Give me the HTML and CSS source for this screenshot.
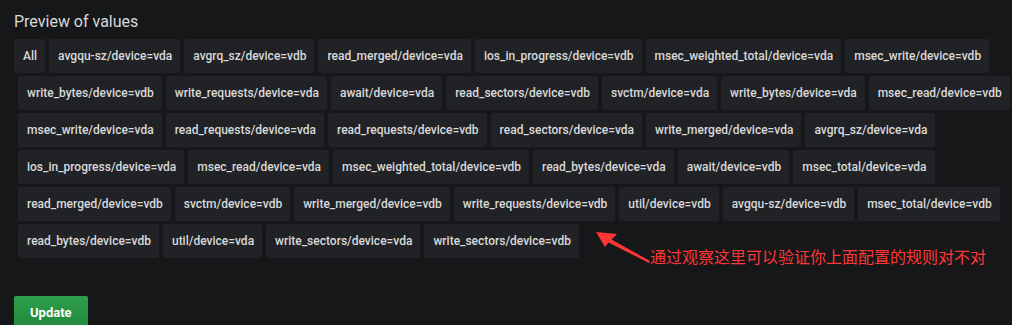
FILE: index.html
```html
<!DOCTYPE html>
<html lang="zh-CN">

<head>
    <meta charset="UTF-8">
    <title>Preview of values</title>
    <link rel="stylesheet" href="styles.css">
</head>

<body>
<div id="page">
    <div class="section-title">Preview of values</div>

    <div id="preview-values">
        <div class="value-row first-row">
            <span class="value-label">All</span>
            <span class="value-label">avgqu-sz/device=vda</span>
            <span class="value-label">avgrq_sz/device=vdb</span>
            <span class="value-label">read_merged/device=vda</span>
            <span class="value-label">ios_in_progress/device=vdb</span>
            <span class="value-label">msec_weighted_total/device=vda</span>
            <span class="value-label">msec_write/device=vdb</span>
        </div>
        <div class="value-row">
            <span class="value-label">write_bytes/device=vdb</span>
            <span class="value-label">write_requests/device=vda</span>
            <span class="value-label">await/device=vda</span>
            <span class="value-label">read_sectors/device=vdb</span>
            <span class="value-label">svctm/device=vda</span>
            <span class="value-label">write_bytes/device=vda</span>
            <span class="value-label">msec_read/device=vdb</span>
        </div>
        <div class="value-row">
            <span class="value-label">msec_write/device=vda</span>
            <span class="value-label">read_requests/device=vda</span>
            <span class="value-label">read_requests/device=vdb</span>
            <span class="value-label">read_sectors/device=vda</span>
            <span class="value-label">write_merged/device=vda</span>
            <span class="value-label">avgrq_sz/device=vda</span>
        </div>
        <div class="value-row">
            <span class="value-label">ios_in_progress/device=vda</span>
            <span class="value-label">msec_read/device=vda</span>
            <span class="value-label">msec_weighted_total/device=vdb</span>
            <span class="value-label">read_bytes/device=vda</span>
            <span class="value-label">await/device=vdb</span>
            <span class="value-label">msec_total/device=vda</span>
        </div>
        <div class="value-row">
            <span class="value-label">read_merged/device=vdb</span>
            <span class="value-label">svctm/device=vdb</span>
            <span class="value-label">write_merged/device=vdb</span>
            <span class="value-label">write_requests/device=vdb</span>
            <span class="value-label">util/device=vdb</span>
            <span class="value-label">avgqu-sz/device=vdb</span>
            <span class="value-label">msec_total/device=vdb</span>
        </div>
        <div class="value-row">
            <span class="value-label">read_bytes/device=vdb</span>
            <span class="value-label">util/device=vda</span>
            <span class="value-label">write_sectors/device=vda</span>
            <span class="value-label">write_sectors/device=vdb</span>
        </div>
    </div>

    <button id="update-button">Update</button>

    <!-- 标注 -->
    <svg class="note-arrow" width="70" height="40" viewBox="0 0 70 40">
        <polygon points="1,2 22,4 16.5,9.5 55,31 54,33 13.5,12.5 10,17" fill="#ff3636"/>
    </svg>
    <div class="note-text">通过观察这里可以验证你上面配置的规则对不对</div>
</div>
</body>

</html>
```

FILE: styles.css
```css
body {
    margin: 0;
    background-color: #161719;
    font-family: Roboto, "Helvetica Neue", Arial, sans-serif;
    color: #d8d9da;
    overflow: hidden;
}

#page {
    position: relative;
    padding: 12px 0 0 14px;
}

.section-title {
    font-size: 16px;
    line-height: 19px;
    margin-bottom: 8px;
}

#preview-values {
    display: flex;
    flex-direction: column;
    gap: 3px;
    padding-left: 4px;
}

.value-row {
    display: flex;
    gap: 4px;
}

.first-row {
    margin-left: -4px;
}

.value-label {
    height: 34px;
    line-height: 34px;
    padding: 0 8px 0 9px;
    background-color: #212225;
    border-radius: 2px;
    font-size: 12px;
    font-weight: 500;
    white-space: nowrap;
}

#update-button {
    margin-top: 38px;
    height: 32px;
    padding: 0 16px;
    border: none;
    border-radius: 2px;
    background: linear-gradient(to bottom, #2c9f4a, #23883d);
    color: #fff;
    font-family: Roboto, "Helvetica Neue", Arial, sans-serif;
    font-size: 13px;
    font-weight: 700;
}

.note-arrow {
    position: absolute;
    left: 595px;
    top: 230px;
}

.note-text {
    position: absolute;
    left: 650px;
    top: 246px;
    font-family: "Noto Sans CJK SC", sans-serif;
    font-size: 16px;
    line-height: 20px;
    color: #ff3636;
}
```
